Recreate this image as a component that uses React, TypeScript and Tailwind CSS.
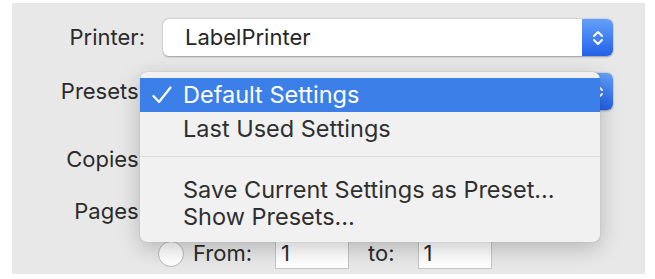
import React from 'react';

function Stepper() {
  return (
    <svg width="12" height="20" viewBox="0 0 12 20" fill="none">
      <path d="M2 8 L6 4 L10 8" stroke="white" strokeWidth="2" strokeLinecap="round" strokeLinejoin="round" />
      <path d="M2 12 L6 16 L10 12" stroke="white" strokeWidth="2" strokeLinecap="round" strokeLinejoin="round" />
    </svg>
  );
}

function Check() {
  return (
    <svg width="20" height="18" viewBox="0 0 20 18" fill="none">
      <path d="M1.5 10 L7 16 L18.5 1.5" stroke="white" strokeWidth="2.2" strokeLinecap="round" strokeLinejoin="round" />
    </svg>
  );
}

function PopUp({ value }: { value: string }) {
  return (
    <div className="flex h-full w-[450px] rounded-[6px] bg-white shadow-[0_0.5px_2px_rgba(0,0,0,0.35)]">
      <div className="flex flex-1 items-center pl-[22px] text-[#262626]">{value}</div>
      <div className="flex w-[31px] items-center justify-center rounded-r-[6px] bg-gradient-to-b from-[#64a0fa] to-[#2260e8]">
        <Stepper />
      </div>
    </div>
  );
}

function Label({ text }: { text: string }) {
  return <div className="flex items-center justify-end text-[#2b2b2b]">{text}</div>;
}

const items = ['Save Current Settings as Preset…', 'Show Presets…'];

export default function App() {
  return (
    <div className="h-[279px] w-[655px] bg-white pl-[12px] pt-[3px]" style={{ fontFamily: 'Inter, "Liberation Sans", sans-serif' }}>
      <div className="relative flex h-[271px] w-[633px] flex-col bg-[#e8e8e8] pt-[16px] text-[22px]">
        {/* Printer */}
        <div className="grid h-[37px] grid-cols-[133px_1fr] gap-x-[18px]">
          <Label text="Printer:" />
          <PopUp value="LabelPrinter" />
        </div>

        {/* Presets (its value is hidden by the open menu) */}
        <div className="mt-[17px] grid h-[37px] grid-cols-[133px_1fr] gap-x-[18px]">
          <Label text="Presets:" />
          <PopUp value="" />
        </div>

        {/* Copies */}
        <div className="mt-[33px] grid h-[30px] grid-cols-[133px_1fr] gap-x-[18px]">
          <Label text="Copies:" />
          <div className="h-full w-[60px] border border-[#c9c9c9] bg-white" />
        </div>

        {/* Pages */}
        <div className="mt-[22px] grid h-[30px] grid-cols-[133px_1fr] gap-x-[18px]">
          <Label text="Pages:" />
          <div />
        </div>

        {/* From / to */}
        <div className="mt-[12px] grid h-[30px] grid-cols-[133px_1fr] gap-x-[18px]">
          <div />
          <div className="flex items-center text-[#2b2b2b]">
            <div className="ml-[-5px] h-[26px] w-[26px] rounded-full border border-[#b9b9b9] bg-white" />
            <span className="ml-[9px]">From:</span>
            <div className="ml-[23px] flex h-[30px] w-[74px] items-center border border-[#c6c6c6] bg-white pl-[5px]">1</div>
            <span className="ml-[19px]">to:</span>
            <div className="ml-[23px] flex h-[30px] w-[74px] items-center border border-[#c6c6c6] bg-white pl-[5px]">1</div>
          </div>
        </div>

        {/* Presets menu */}
        <div className="absolute left-[128px] top-[69px] w-[460px] rounded-[7px] bg-[#f1f1f1] pb-[12px] pt-[6px] text-[23.5px] text-[#2f2f2f] shadow-[0_6px_22px_rgba(0,0,0,0.22),0_0_1px_rgba(0,0,0,0.3)]">
          <div className="flex h-[34px] items-center bg-[#3d7fe9] text-white">
            <span className="flex w-[43px] pl-[12px]"><Check /></span>
            <span>Default Settings</span>
          </div>
          <div className="flex h-[34px] items-center pl-[43px]">Last Used Settings</div>
          <div className="my-[10px] h-px bg-[#d9d9d9]" />
          <div className="pt-[9px]">
            {items.map((t) => (
              <div key={t} className="flex h-[27px] items-center pl-[43px]">{t}</div>
            ))}
          </div>
        </div>
      </div>
    </div>
  );
}
